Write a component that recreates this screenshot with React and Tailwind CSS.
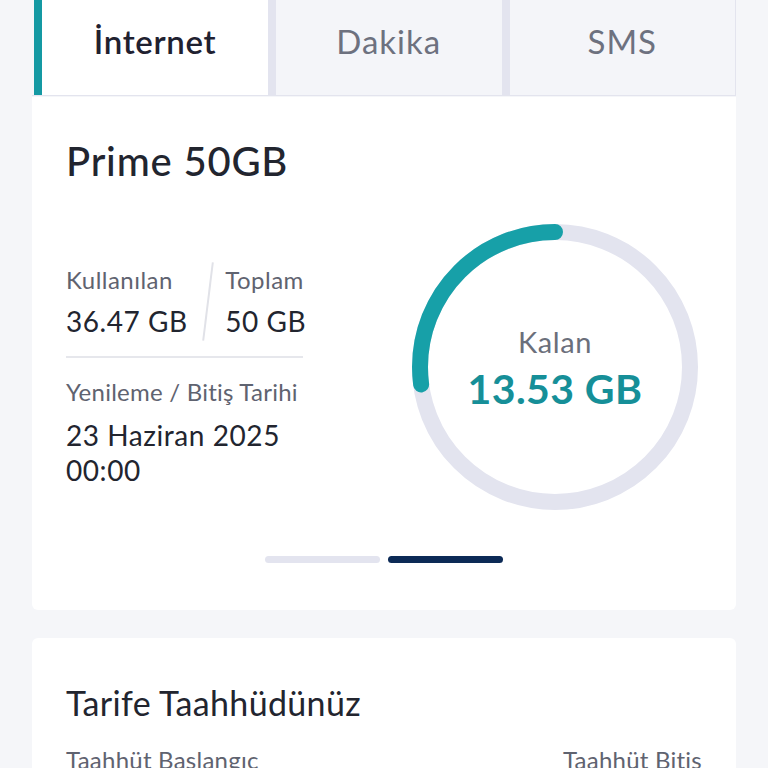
import React from "react";

const tabs = ["İnternet", "Dakika", "SMS"];

// Remaining-quota ring: teal arc for what is left, drawn counter-clockwise from the top.
const Ring = ({ used, total }) => {
  const r = 135;
  const c = 2 * Math.PI * r;
  const left = (total - used) / total;
  return (
    <div className="relative h-[288px] w-[288px] shrink-0">
      <svg width="288" height="288" viewBox="0 0 288 288" className="absolute inset-0">
        <circle cx="144" cy="144" r={r} fill="none" stroke="#e3e4ef" strokeWidth="16" />
        <circle
          cx="144"
          cy="144"
          r={r}
          fill="none"
          stroke="#17a0a8"
          strokeWidth="16"
          strokeLinecap="round"
          strokeDasharray={`${c * left} ${c}`}
          transform="rotate(-90 144 144) scale(1 -1) translate(0 -288)"
        />
      </svg>
      <div className="absolute inset-0 flex flex-col items-center justify-center pt-[2px]">
        <p className="text-[29px] leading-none tracking-[0.02em] text-[#6b6f7b]">Kalan</p>
        <p className="mt-[12px] text-[41px] font-bold leading-none tracking-[0.01em] text-[#168f98]">13.53 GB</p>
      </div>
    </div>
  );
};

export default function App() {
  return (
    <div
      className="min-h-screen bg-[#f5f6f9] px-8 text-[#22252f]"
      style={{ fontFamily: "Lato, 'Open Sans', sans-serif" }}
    >
      <div className="flex h-[96px] border-b border-r border-[#e3e4ee]">
        {tabs.map((tab, i) => (
          <div
            key={tab}
            className={
              i === 0
                ? "ml-[2px] flex w-[234px] items-center justify-center border-l-[8px] border-[#1499a3] bg-white pb-[12px]"
                : "flex flex-1 items-center justify-center border-l-[8px] border-[#e3e4ef] bg-[#f4f5f9] pb-[12px]"
            }
          >
            <span
              className={
                i === 0
                  ? "text-[33px] font-semibold tracking-[0.02em] text-[#1f2130]"
                  : "text-[33px] tracking-[0.03em] text-[#6d717f]"
              }
            >
              {tab}
            </span>
          </div>
        ))}
      </div>

      <section className="mt-[1px] rounded-b-md bg-white px-[34px] pb-[47px] pt-[44px]">
        <h1 className="text-[40px] font-medium leading-none tracking-[0.02em]">Prime 50GB</h1>

        <div className="mt-[42px] flex items-start justify-between pr-[3px]">
          <div className="w-[237px] shrink-0 whitespace-nowrap pt-[45px]">
            <div className="flex">
              <div className="shrink-0">
                <p className="text-[24px] leading-none tracking-[0.02em] text-[#5f6370]">Kullanılan</p>
                <p className="mt-[15px] text-[28px] leading-none tracking-[0.02em]">36.47 GB</p>
              </div>
              <div className="-my-[6px] ml-[19px] mr-[17px] h-[79px] w-[1.5px] shrink-0 rotate-[7deg] bg-[#e1e2e8]" />
              <div className="shrink-0">
                <p className="text-[24px] leading-none tracking-[0.02em] text-[#5f6370]">Toplam</p>
                <p className="mt-[15px] text-[28px] leading-none tracking-[0.02em]">50 GB</p>
              </div>
            </div>
            <div className="mt-[21px] h-[2px] bg-[#e6e7ec]" />
            <p className="mt-[22px] text-[24px] leading-none tracking-[0.01em] text-[#5f6370]">
              Yenileme / Bitiş Tarihi
            </p>
            <p className="mt-[14px] text-[28px] leading-[35px] tracking-[0.02em]">
              23 Haziran 2025
              <br />
              00:00
            </p>
          </div>
          <Ring used={36.47} total={50} />
        </div>

        <div className="mt-[45px] flex justify-center gap-2">
          <div className="h-[7px] w-[115px] rounded-sm bg-[#e3e4ef]" />
          <div className="h-[7px] w-[115px] rounded-sm bg-[#0c2a56]" />
        </div>
      </section>

      <section className="mt-[28px] rounded-t-md bg-white px-[34px] pb-10 pt-[48px]">
        <h2 className="text-[34px] leading-none tracking-[0.01em]">Tarife Taahhüdünüz</h2>
        <div className="mt-[28px] flex justify-between text-[24px] leading-none tracking-[0.01em] text-[#5f6370]">
          <span>Taahhüt Başlangıç</span>
          <span>Taahhüt Bitiş</span>
        </div>
      </section>
    </div>
  );
}
